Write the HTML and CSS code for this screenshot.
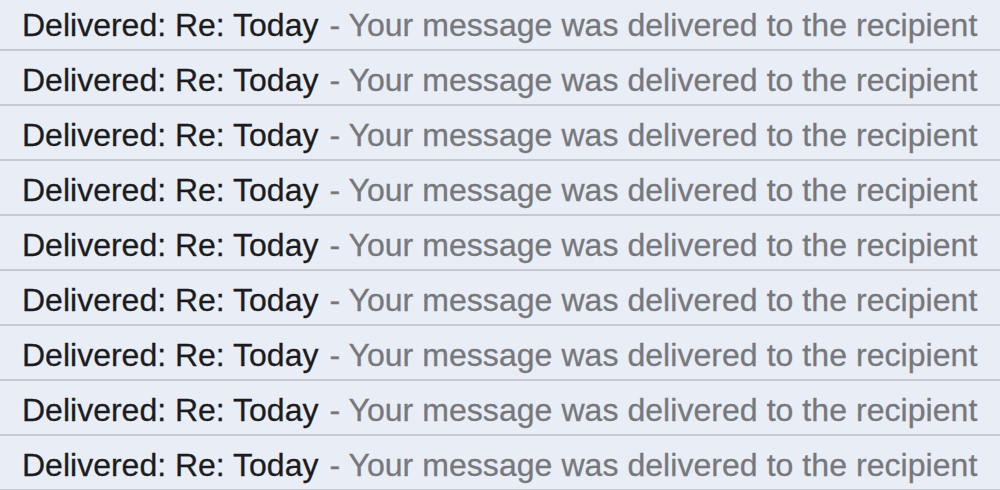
FILE: index.html
```html
<!DOCTYPE html>
<html>
<head>
<meta charset="utf-8">
<link rel="stylesheet" href="styles.css">
</head>
<body>
<div class="list">
  <div class="row"><span class="subject">Delivered: Re: Today</span><span class="snippet"> - Your message was delivered to the recipient</span></div>
  <div class="row"><span class="subject">Delivered: Re: Today</span><span class="snippet"> - Your message was delivered to the recipient</span></div>
  <div class="row"><span class="subject">Delivered: Re: Today</span><span class="snippet"> - Your message was delivered to the recipient</span></div>
  <div class="row"><span class="subject">Delivered: Re: Today</span><span class="snippet"> - Your message was delivered to the recipient</span></div>
  <div class="row"><span class="subject">Delivered: Re: Today</span><span class="snippet"> - Your message was delivered to the recipient</span></div>
  <div class="row"><span class="subject">Delivered: Re: Today</span><span class="snippet"> - Your message was delivered to the recipient</span></div>
  <div class="row"><span class="subject">Delivered: Re: Today</span><span class="snippet"> - Your message was delivered to the recipient</span></div>
  <div class="row"><span class="subject">Delivered: Re: Today</span><span class="snippet"> - Your message was delivered to the recipient</span></div>
  <div class="row"><span class="subject">Delivered: Re: Today</span><span class="snippet"> - Your message was delivered to the recipient</span></div>
</div>
</body>
</html>
```

FILE: styles.css
```css
html, body {
  margin: 0;
  padding: 0;
  background: #e9edf6;
  overflow: hidden;
}
.list {
  margin-top: -4px;
  display: flex;
  flex-direction: column;
}
.row {
  height: 55px;
  box-sizing: border-box;
  padding-top: 5px;
  padding-left: 22px;
  border-bottom: 2px solid #c6c9d0;
  display: flex;
  align-items: center;
  font-family: "Liberation Sans", Arial, sans-serif;
  font-size: 32px;
  white-space: nowrap;
  -webkit-text-stroke: 0.3px currentColor;
}
.subject {
  color: #1c1c1e;
}
.snippet {
  color: #77787c;
  white-space: pre;
  padding-left: 2px;
  letter-spacing: 0.05px;
}
```
